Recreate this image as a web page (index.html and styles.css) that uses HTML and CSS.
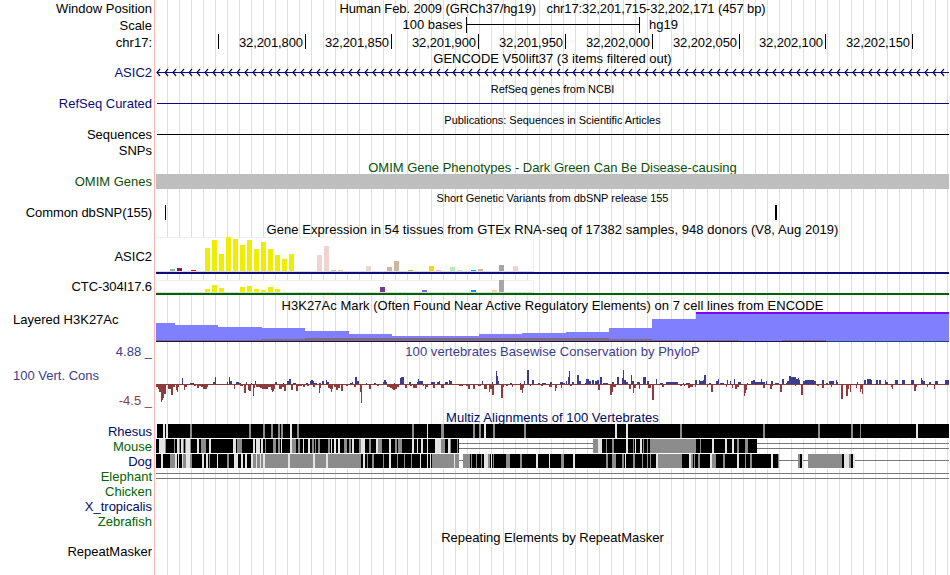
FILE: index.html
```html
<!DOCTYPE html>
<html lang="en">
<head>
  <meta charset="UTF-8" />
  <meta name="viewport" content="width=device-width, initial-scale=1.0"/>
  <title>chr17:32,201,715-32,202,171</title>
  <link rel="stylesheet" href="styles.css">
</head>
<body>
  <div class="browser">
    <div class="track head">
      <div class="label"><span>Window Position</span></div>
      <div class="title tight"><span>Human Feb. 2009 (GRCh37/hg19) &nbsp; chr17:32,201,715-32,202,171 (457 bp)</span></div>
    </div>
    <div class="track head">
      <div class="label"><span>Scale</span></div>
      <svg viewBox="156 0 793 17" shape-rendering="crispEdges">
        <text x="462.5" y="12" text-anchor="end">100 bases</text>
        <path d="M466 0h1v16h-1zM639 0h1v16h-1zM466 7h174v1H466z"/>
        <text x="649" y="12">hg19</text>
      </svg>
    </div>
    <div class="track head">
      <div class="label"><span>chr17:</span></div>
      <svg id="ruler" viewBox="156 0 793 17" shape-rendering="crispEdges"></svg>
    </div>

    <div class="track heading"><div class="title"><span>GENCODE V50lift37 (3 items filtered out)</span></div></div>
    <div class="track item navy">
      <div class="label"><span>ASIC2</span></div>
      <svg id="gencode" viewBox="156 0 793 14"></svg>
    </div>

    <div class="track head"><div class="title small"><span>RefSeq genes from NCBI</span></div></div>
    <div class="track item navy">
      <div class="label"><span>RefSeq Curated</span></div>
      <svg viewBox="156 0 793 14"><rect x="157" y="6" width="792" height="1"/></svg>
    </div>

    <div class="track head"><div class="title small"><span>Publications: Sequences in Scientific Articles</span></div></div>
    <div class="track item">
      <div class="label"><span>Sequences</span></div>
      <svg viewBox="156 0 793 14"><rect x="157" y="6" width="792" height="1"/></svg>
    </div>
    <div class="track head"><div class="label"><span>SNPs</span></div></div>

    <div class="track heading omim-heading green"><div class="title"><span>OMIM Gene Phenotypes - Dark Green Can Be Disease-causing</span></div></div>
    <div class="track row green">
      <div class="label"><span>OMIM Genes</span></div>
      <div class="omim"></div>
    </div>

    <div class="track snp-heading"><div class="title small"><span>Short Genetic Variants from dbSNP release 155</span></div></div>
    <div class="track row">
      <div class="label tight"><span>Common dbSNP(155)</span></div>
      <svg viewBox="156 0 793 15"><path d="M165 0h1v15h-1zM775 0h2v15h-2z"/></svg>
    </div>

    <div class="track head gtex-heading"><div class="title loose"><span>Gene Expression in 54 tissues from GTEx RNA-seq of 17382 samples, 948 donors (V8, Aug 2019)</span></div></div>
    <div class="track gtex">
      <div class="label"><span>ASIC2</span></div>
      <svg id="gtexAsic2" viewBox="156 237 793 38"></svg>
    </div>
    <div class="track gtex-small">
      <div class="label tight"><span>CTC-304I17.6</span></div>
      <svg id="gtexCtc" viewBox="156 275 793 23"></svg>
    </div>

    <div class="track histone-heading"><div class="title loose"><span>H3K27Ac Mark (Often Found Near Active Regulatory Elements) on 7 cell lines from ENCODE</span></div></div>
    <div class="track histone">
      <div class="label left"><span>Layered H3K27Ac</span></div>
      <svg viewBox="156 312 793 30" shape-rendering="crispEdges">
        <path fill="#8080ff" d="M156 342V323H175V325H218V327H262V328H305V331H349V334H392V336H479V334H522V333H566V332H609V328H652V319H696V312H949V342Z"/>
        <path fill="#8000ff" d="M696 312H949V314H696Z"/>
        <path fill="#806c80" d="M156 342V340H262V339H305V338H609V339H652V340H739V342ZM782 340H826V342H782Z"/>
        <path fill="#1c1450" d="M156 341H826V342H156Z"/>
        <path fill="#1c4878" d="M826 341H949V342H826Z"/>
      </svg>
    </div>

    <div class="track cons-heading blue">
      <div class="label"><span>4.88 _</span></div>
      <div class="title loose"><span>100 vertebrates Basewise Conservation by PhyloP</span></div>
    </div>
    <div class="track cons blue">
      <div class="cons-labels">
        <div class="label left"><span>100 Vert. Cons</span></div>
        <div class="label red"><span>-4.5 _</span></div>
      </div>
      <svg id="phylop" viewBox="156 360 793 50"></svg>
    </div>

    <div class="track multiz-heading species-a"><div class="title loose"><span>Multiz Alignments of 100 Vertebrates</span></div></div>
    <div class="track row species-a">
      <div class="label"><span>Rhesus</span></div>
      <svg id="rhesus" viewBox="156 0 793 15"></svg>
    </div>
    <div class="track row species-b">
      <div class="label"><span>Mouse</span></div>
      <svg id="mouse" viewBox="156 0 793 15"></svg>
    </div>
    <div class="track row species-a">
      <div class="label"><span>Dog</span></div>
      <svg id="dog" viewBox="156 0 793 15"></svg>
    </div>
    <div class="track row species-b">
      <div class="label"><span>Elephant</span></div>
      <svg viewBox="156 0 793 15"><path fill="#787878" d="M156 4h793v1H156zM156 9h793v1H156z"/></svg>
    </div>
    <div class="track row species-b"><div class="label"><span>Chicken</span></div></div>
    <div class="track row species-a"><div class="label"><span>X_tropicalis</span></div></div>
    <div class="track row species-b"><div class="label"><span>Zebrafish</span></div></div>

    <div class="track rmsk-heading"><div class="title"><span>Repeating Elements by RepeatMasker</span></div></div>
    <div class="track item"><div class="label"><span>RepeatMasker</span></div></div>
  </div>

  <script src="tracks.js"></script>
</body>
</html>
```
FILE: styles.css
```css
body {
  margin: 0;
  background: #fff;
  font-family: "Liberation Sans", Arial, Helvetica, sans-serif;
  font-size: 13px;
  line-height: 15px;
  color: #000;
}

/* red divider at the label edge, guidelines every 12px */
.browser {
  width: 949px;
  height: 575px;
  overflow: hidden;
  background:
    linear-gradient(#ffb4b4, #ffb4b4) 154px 0 / 1px 100% no-repeat,
    repeating-linear-gradient(to right, #dcdcf8 0, #dcdcf8 1px, transparent 1px, transparent 12px) 167px 0 / 782px 100% no-repeat;
}

.track {
  display: grid;
  grid-template-columns: 156px 793px;
  grid-template-rows: 100%;
  align-items: center;
  white-space: nowrap;
}

.track svg {
  display: block;
  width: 793px;
  height: 100%;
  fill: currentColor;
}

.label {
  padding-right: 4px;
  text-align: right;
}

.label.left {
  padding-left: 13px;
  text-align: left;
}

.title {
  grid-column: 2;
  text-align: center;
}

.small {
  padding-top: 2px;
  font-size: 11px;
  letter-spacing: -0.03px;
}

.tight { letter-spacing: -0.1px; }
.loose { letter-spacing: 0.05px; }

#ruler { letter-spacing: -0.1px; }

.head { height: 17px; }
.heading { height: 15px; }
.item { height: 14px; line-height: 14px; }
.row { height: 15px; }
.snp-heading { height: 16px; }
.gtex { height: 38px; }
.gtex-small { height: 23px; }
.histone-heading { height: 14px; line-height: 14px; }
.histone { height: 30px; }
.cons-heading { height: 18px; }
.cons { height: 50px; }
.multiz-heading { height: 14px; line-height: 14px; }
.rmsk-heading { height: 16px; }

.omim-heading .title,
.gtex-heading .title,
.histone-heading .title,
.multiz-heading .title {
  padding-top: 2px;
}

.histone .label {
  align-self: start;
}

.cons-labels {
  display: flex;
  flex-direction: column;
  align-self: start;
  gap: 10px;
  padding-top: 8px;
}

.omim {
  height: 15px;
  background: #bebebe;
}

.navy { color: #0c0c78; }
.green { color: #0a500a; }
.blue { color: #3c3c8c; }
.red { color: #8c3c3c; }
.species-a { color: #000a64; }
.species-b { color: #006400; }
```
FILE: tracks.js
```js
const svgRect = (x, y, w, h, fill) =>
  `<rect x="${x}" y="${y}" width="${w}" height="${h}" fill="${fill}"/>`;

function draw(id, markup) {
  document.getElementById(id).innerHTML = markup;
}

// base position ruler
const ticks = [
  [218, ''], [305, '32,201,800'], [391, '32,201,850'], [478, '32,201,900'], [565, '32,201,950'],
  [652, '32,202,000'], [739, '32,202,050'], [825, '32,202,100'], [912, '32,202,150']
];
draw('ruler', ticks.map(([x, text]) =>
  svgRect(x, 0, 1, 15, '#000') + (text ? `<text x="${x - 2}" y="13" text-anchor="end">${text}</text>` : '')
).join(''));

// minus strand intron line with arrows
let arrows = svgRect(157, 6, 792, 1, '#0c0c78');
for (let x = 157; x < 946; x += 8) {
  arrows += `<path d="M${x + 3} 3l-3 3.5l3 3.5" fill="none" stroke="#0c0c78" stroke-width="1.2"/>`;
}
draw('gencode', arrows);

// GTEx bars: [x, top, color]
const Y = '#eeee00', P = '#eed5d2', T = '#cdb79e';
const asic2 = [
  [170, 269, '#8fbc8f'], [177, 268, '#8b1c62'], [191, 270, '#ff0000'],
  [205, 248, Y], [212, 240, Y], [219, 254, Y], [226, 237, Y], [233, 239, Y], [240, 245, Y], [247, 240, Y],
  [254, 249, Y], [261, 242, Y], [268, 249, Y], [275, 255, Y], [282, 259, Y], [289, 254, Y],
  [317, 255, P], [324, 246, P], [331, 270, T], [338, 270, '#eec591'], [366, 266, P], [387, 267, T], [394, 261, T],
  [408, 270, '#9acd32'], [429, 266, '#ffd700'], [436, 270, '#ffb6c1'], [450, 267, '#b4eeb4'], [457, 270, '#d9d9d9'],
  [471, 270, '#1e90ff'], [478, 269, T], [499, 265, '#a6a6a6'], [513, 266, P]
];
const ctc = [
  [205, 289, Y], [212, 285, Y], [219, 288, Y], [240, 287, Y], [247, 286, Y], [254, 289, Y], [261, 290, Y],
  [268, 287, Y], [275, 289, Y], [380, 287, '#7a378b'], [422, 290, '#7a67ee'], [471, 290, '#1e90ff'],
  [492, 290, '#ffd39b'], [499, 280, '#a6a6a6']
];

function gtex(id, bars, top, bottom, color) {
  draw(id,
    svgRect(156, top, 378, bottom - top, '#f0f0f0') +
    svgRect(156, top + 1, 377, bottom - top - 1, '#fff') +
    svgRect(156, bottom, 378, 1, '#dcdcdc') +
    bars.map(([x, y, fill]) => svgRect(x, y, 5, bottom - y, fill)).join('') +
    svgRect(156, bottom + 1, 793, 2, color));
}
gtex('gtexAsic2', asic2, 237, 271, '#0c0c78');
gtex('gtexCtc', ctc, 280, 292, '#006400');

// PhyloP scores: x, width, height
const up = `182,1,6 190,4,1 213,3,2 215,1,7 227,1,2 229,1,7 230,2,3 236,3,2 239,2,1 246,1,2 251,1,1 255,1,3 275,2,2
283,1,1 287,2,3 289,2,5 293,3,1 306,2,1 310,4,3 311,2,4 314,3,1 319,2,1 322,2,3 326,1,4 327,2,2 350,3,1 352,1,2
355,2,7 357,2,3 366,1,1 374,2,1 383,4,2 384,2,4 394,1,1 400,2,6 401,3,7 409,2,2 417,1,2 418,1,5 419,3,3 422,1,3
431,4,2 437,3,2 439,1,3 445,3,2 449,1,4 450,2,3 482,1,3 492,1,2 496,1,13 497,1,8 498,1,3 510,2,1 520,1,1 524,1,3
527,2,14 532,2,4 538,2,1 542,4,1 550,2,2 560,3,2 563,2,1 566,1,3 568,1,7 569,1,13 572,2,2 577,2,9 579,2,3 585,4,1
586,3,5 589,2,3 592,2,4 595,2,3 597,2,4 600,2,7 601,1,6 603,5,1 612,2,2 617,2,7 622,2,6 623,1,14 624,2,4 626,2,2
631,1,9 632,2,3 637,3,2 643,3,7 647,2,3 656,1,5 660,3,1 666,12,2 683,1,1 686,4,1 695,2,4 699,1,4 700,3,3 703,1,4
704,2,9 709,2,1 716,2,3 718,1,5 720,4,1 727,1,4 730,1,3 734,1,5 738,3,2 747,1,1 751,3,3 753,2,4 755,6,2 761,1,5
762,3,2 766,1,3 771,2,3 775,4,1 782,2,5 786,3,1 787,2,3 789,2,8 791,5,7 796,2,5 798,1,6 799,1,4 803,3,3 805,9,4
814,2,3 822,2,4 826,2,1 829,5,3 836,1,4 837,1,2 857,1,2 864,2,4 867,4,5 869,3,4 876,2,4 879,2,4 885,1,4 886,2,2
895,3,4 902,3,4 911,3,4 921,1,6 922,1,4 923,2,3 929,2,2 935,3,3 945,4,4`;
const down = `156,2,3 158,2,5 159,2,8 161,1,18 162,1,16 163,1,14 164,2,10 168,3,5 171,2,11 173,2,3 176,1,6 177,1,8
178,1,3 184,1,6 185,2,3 194,2,2 197,2,4 199,2,2 201,2,3 203,4,5 206,2,3 234,1,5 240,3,2 244,2,9 248,1,6 249,2,7
253,1,12 254,1,4 256,4,3 260,2,4 262,6,5 268,3,3 271,1,6 272,1,8 273,1,7 274,1,5 279,3,5 282,2,3 284,2,7 291,2,6
296,2,7 298,4,2 303,2,3 307,2,2 313,2,3 319,1,9 320,1,4 328,2,4 330,1,5 331,1,8 332,1,5 334,2,3 336,2,6 338,2,4
341,2,7 346,2,2 354,2,3 360,1,8 361,1,19 369,2,5 377,2,2 387,3,3 390,2,4 392,1,5 393,2,6 395,2,5 397,2,3 405,2,4
410,2,2 413,4,4 423,1,2 425,1,5 426,2,3 433,2,4 441,3,4 443,1,3 459,4,2 466,2,2 468,2,5 473,2,5 478,3,2 484,3,5
486,1,3 489,1,8 490,2,5 492,2,11 501,2,14 503,1,3 506,2,2 512,1,3 520,2,6 522,1,9 523,1,4 530,1,2 541,2,2 549,3,3
555,1,7 556,1,4 561,1,4 570,2,2 598,2,6 610,2,11 611,2,8 613,3,3 629,2,5 633,1,9 634,2,4 639,1,5 648,3,4 652,2,16
662,2,3 680,2,2 684,1,2 688,2,4 690,3,3 695,1,3 707,1,3 711,2,8 726,1,3 732,1,4 735,2,5 737,2,3 744,1,12 745,1,9
746,1,6 763,2,4 770,2,5 772,1,2 780,2,8 795,1,2 801,2,11 817,2,2 822,2,4 831,1,3 841,2,15 846,2,12 848,1,5 850,1,8
856,1,4 860,1,8 861,1,5 862,1,10 891,1,3 892,1,5 914,2,7 916,1,3 927,1,3 934,1,5`;

const triples = text => text.trim().split(/\s+/).map(item => item.split(',').map(Number));
draw('phylop',
  svgRect(156, 384, 793, 1, '#8c3c3c') +
  triples(up).map(([x, w, h]) => svgRect(x, 384 - h, w, h, '#3c3c8c')).join('') +
  triples(down).map(([x, w, h]) => svgRect(x, 384, w, h, '#8c3c3c')).join(''));

// alignments: blocks are [start, end], stripes are shade + x:width
const shades = { g: '#8c8c8c', l: '#e4e4e4' };

function alignment(id, blocks, lines, stripes) {
  draw(id,
    lines.map(([x1, x2, y]) => svgRect(x1, y, x2 - x1, 1, '#787878')).join('') +
    blocks.map(([x1, x2]) => svgRect(x1, 0, x2 - x1, 14, '#000') + svgRect(x1, 14, x2 - x1, 1, '#fff')).join('') +
    stripes.trim().split(/\s+/).map(s => {
      const [x, w] = s.slice(1).split(':');
      return svgRect(x, 0, w, 14, shades[s[0]]);
    }).join(''));
}

alignment('rhesus', [[157, 949]], [], `l163:2 l166:2 g190:2 g249:2 g263:2 g271:2 g278:2 g281:2 l290:2 g297:2 g412:2
l427:1 g441:3 g473:2 g479:2 l484:2 g493:2 g524:2 l615:2 l626:2 g680:2 g763:2 g818:2 g851:2 g860:1 l916:2`);

alignment('mouse', [[156, 459], [593, 757]],
  [[459, 593, 4], [459, 593, 9], [757, 949, 4], [757, 949, 9]],
  `l159:6 g165:1 g174:1 l177:2 g179:1 l181:2 g183:1 g185:1 l186:4 g190:1 l197:2 g201:5 l209:2 l233:3 g237:5 l253:2
  l256:4 l261:2 g265:1 g273:3 g278:2 l281:1 l290:2 g292:4 g298:2 l303:1 l308:2 g312:2 g315:1 g318:2 g328:2 l331:1
  l334:2 l338:2 g344:3 g349:2 l352:2 g359:2 l361:4 g369:2 l376:2 g378:4 l389:2 g395:2 g398:4 l412:2 l417:1 l421:2
  l427:1 l435:6 g441:3 g444:1 l448:2 g450:1 g457:1 g593:5 l598:4 g606:1 g612:2 l626:2 g633:1 l635:1 l640:2
  g643:1 g647:1 g650:46 g700:1 l712:2 l725:2 l732:2 g737:2 g745:3`);

alignment('dog', [[156, 459], [463, 778], [798, 803], [808, 855]],
  [[459, 463, 6], [778, 798, 6], [803, 808, 6], [855, 949, 6]],
  `l161:2 g170:5 l175:2 l178:1 l182:1 g183:3 l186:4 g190:2 l202:2 l206:2 g209:1 l217:1 g227:2 l234:4 l241:2 l245:2
  l251:2 g253:3 l256:1 g257:104 l260:1 l263:2 l288:2 l313:2 l326:2 l363:2 g367:1 g372:2 g383:1 l389:2 g397:1 g404:1
  g411:1 l420:1 l427:1 l430:1 g432:27 l454:1 g463:7 g471:1 g476:1 g481:1 l484:4 g488:2 l491:1 g493:1 g506:4 g520:2
  l536:2 l549:1 g561:3 l573:2 g606:2 g612:4 g622:2 l625:1 g633:2 g642:1 g647:1 g650:1 l656:2 g658:24 l689:2 g691:2
  g694:1 g698:2 l710:2 g712:4 g723:2 l737:2 g745:1 g750:2 l771:2 g778:1 g798:2 l802:1 g808:34 l844:5 g849:2 l853:2`);
```
